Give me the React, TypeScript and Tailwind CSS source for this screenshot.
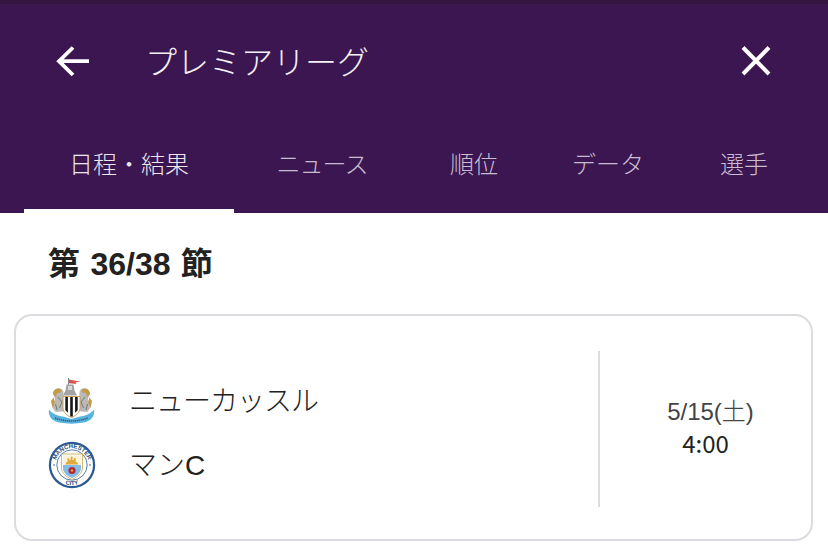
const font = { fontFamily: '"Noto Sans CJK JP", "Liberation Sans", sans-serif' };
const latinFirst = { fontFamily: '"Liberation Sans", "Noto Sans CJK JP", sans-serif' };

function Lion({ flip }: { flip?: boolean }) {
  return (
    <g transform={flip ? "translate(47 0) scale(-1 1)" : undefined}>
      <path d="M5 17 C5 13 8 11 12 11.5 C15 12 16 15 15.5 18 L18 25 L18 34 L8 35 C4 32 3.5 28 6.5 25 C8 23 6.5 20 5 17 Z" fill="#b9b9b9" />
      <path d="M5 16.5 C5.5 13 8.5 11 12 11.7 C14 13.5 13 16.5 10.5 15.8 C8.8 15.5 8 17 8.5 19.5 C6.5 19.5 5.5 18 5 16.5 Z" fill="#c39a45" />
      <path d="M4.5 31 L3 24 L5.5 20.5 L7 25 Z" fill="#c39a45" />
      <path d="M10 20 L14 25 L11.5 31 M7.5 27 L9 33" stroke="#6f6f6f" strokeWidth="0.9" fill="none" />
    </g>
  );
}

function Newcastle() {
  return (
    <svg width="48" height="48" viewBox="0 0 48 48" className="shrink-0">
      <path d="M20.5 1 V12" stroke="#777" strokeWidth="0.9" />
      <path d="M21 2.5 L33 4.8 L27.5 5.2 L28.5 7 L21 6.2 Z" fill="#d8564f" />
      <path d="M18.5 7.5 h7 l1 6 l2.5 5 h-14 l2.5 -5 z" fill="#a3a3a3" />
      <path d="M20 9 h4 v4 h-4 z" fill="#d9d9d9" />
      <Lion />
      <Lion flip />
      <path d="M15 19.5 H32 V31 C32 35.5 28 38.5 23.5 40.5 C19 38.5 15 35.5 15 31 Z" fill="#fff" stroke="#c39a45" strokeWidth="0.9" />
      <path d="M17.3 20 h2.6 v15.8 l-2.6 -2.6 z M22.2 20 h2.6 v19.5 h-2.6 z M27.1 20 h2.6 v13.2 l-2.6 2.6 z" fill="#161616" />
      <path d="M1 32.5 C4 36.5 9 39 15 39.5 L23.5 42 L32 39.5 C38 39 43 36.5 46 32.5 C47 38 44 44 36 45.5 C28 47 19 47 11 45.5 C3 44 0 38 1 32.5 Z" fill="#58b3de" />
      <path d="M7 41 C18 45 29 45 40 41" stroke="#33607f" strokeWidth="1.6" strokeDasharray="1.3 0.7" fill="none" />
    </svg>
  );
}

function ManCity() {
  return (
    <svg width="48" height="48" viewBox="0 0 48 48" className="shrink-0">
      <defs>
        <path id="mc-top" d="M7.2 24 A16.8 16.8 0 0 1 40.8 24" />
        <path id="mc-bottom" d="M3.8 24 A20.2 20.2 0 0 0 44.2 24" />
      </defs>
      <circle cx="24" cy="24" r="23.2" fill="#2b5a92" />
      <circle cx="24" cy="24" r="21" fill="#fff" />
      <text fontSize="6" fontWeight="700" fill="#24507f" style={latinFirst} textAnchor="middle">
        <textPath href="#mc-top" startOffset="50%">MANCHESTER</textPath>
      </text>
      <text fontSize="6" fontWeight="700" fill="#24507f" style={latinFirst} textAnchor="middle">
        <textPath href="#mc-bottom" startOffset="50%">CITY</textPath>
      </text>
      <circle cx="24" cy="24" r="15.2" fill="#fff" stroke="#2b5a92" strokeWidth="0.8" />
      <circle cx="6" cy="24" r="0.8" fill="#2b5a92" />
      <circle cx="42" cy="24" r="0.8" fill="#2b5a92" />
      <path d="M13.5 13 H34.5 V27 C34.5 32 29.5 36 24 38.5 C18.5 36 13.5 32 13.5 27 Z" fill="#fff" stroke="#c9a54a" strokeWidth="0.8" />
      <path d="M15 14.5 H33 V24 H15 Z" fill="#f8f1dc" />
      <path d="M15 24 H33 V27 C33 31.5 29 35 24 37 C19 35 15 31.5 15 27 Z" fill="#84bbe4" />
      <path d="M17.5 23.5 h13 l-1.8 -2.4 h-1 v-4 h-1.8 v2 h-1.4 v-3.4 h-1.8 v3.4 h-1.4 v-1.8 h-1.8 v3.8 h-1 z" fill="#e0ab3a" />
      <circle cx="24" cy="29.5" r="3.6" fill="#b0253a" />
      <circle cx="24" cy="29.5" r="1.2" fill="#e0a53a" />
    </svg>
  );
}

export default function App() {
  const tabs = [
    { label: "ニュース", cls: "w-[176px] tracking-[-1px]" },
    { label: "順位", cls: "w-[128px]" },
    { label: "データ", cls: "w-[140px]" },
    { label: "選手", cls: "w-[132px]" },
  ];
  return (
    <div className="w-[828px] h-[548px] bg-white overflow-hidden" style={font}>
      <header className="bg-[#3b1650] h-[213px] border-t-4 border-[#33143f] flex flex-col">
        <div className="h-[116px] flex items-center pl-[48px] pr-[48px] pb-[2px]">
          <svg width="48" height="48" viewBox="0 0 48 48" className="shrink-0">
            <path d="M41 24.2 H11 M25 10.5 L11 24.2 L25 38" fill="none" stroke="#fff" strokeWidth="3.8" />
          </svg>
          <div className="ml-[49px] mb-[3px] text-[32px] leading-none text-[#f4f0f6] font-light whitespace-nowrap">プレミアリーグ</div>
          <svg width="48" height="48" viewBox="0 0 48 48" className="ml-auto shrink-0">
            <path d="M11 10.5 L37 37 M37 10.5 L11 37" fill="none" stroke="#fff" strokeWidth="4" />
          </svg>
        </div>
        <nav className="flex flex-1 pl-[24px]">
          <div className="w-[210px] h-full relative flex items-center justify-center pb-[8px] text-[24px] text-[#ece6ef] font-light">
            日程・結果
            <div className="absolute left-0 right-0 bottom-0 h-[4px] bg-white" />
          </div>
          {tabs.map((t) => (
            <div key={t.label} className={`${t.cls} shrink-0 flex items-center justify-center pb-[8px] text-[24px] text-[#c9bcd0] font-light`}>
              {t.label}
            </div>
          ))}
        </nav>
      </header>
      <h2 className="ml-[48px] h-[101px] flex items-center text-[32px] font-bold text-[#222222] leading-none [word-spacing:1.5px]" style={latinFirst}>
        第 36/38 節
      </h2>
      <section className="ml-[14px] mr-[15px] h-[227px] border-2 border-[#dcdce0] rounded-[18px] flex items-center">
        <div className="flex-1 flex flex-col gap-[16px] pl-[32px] pt-[10px]">
          <div className="flex items-center gap-[33px] h-[48px]">
            <Newcastle />
            <span className="text-[28px] font-light text-[#222222] leading-none tracking-[-1px] pt-[2px]" style={latinFirst}>ニューカッスル</span>
          </div>
          <div className="flex items-center gap-[33px] h-[48px]">
            <ManCity />
            <span className="text-[28px] font-light text-[#222222] leading-none pt-[2px]" style={latinFirst}>マンC</span>
          </div>
        </div>
        <div className="w-[2px] h-[156px] mt-[2px] bg-[#dcdce0] shrink-0" />
        <div className="w-[211px] flex flex-col items-center pb-[2px]">
          <span className="text-[24px] leading-[32px] pl-[10px] font-light text-[#444444]" style={latinFirst}>5/15(土)</span>
          <span className="text-[24px] leading-[30px] font-normal text-[#222222]">4:00</span>
        </div>
      </section>
    </div>
  );
}
